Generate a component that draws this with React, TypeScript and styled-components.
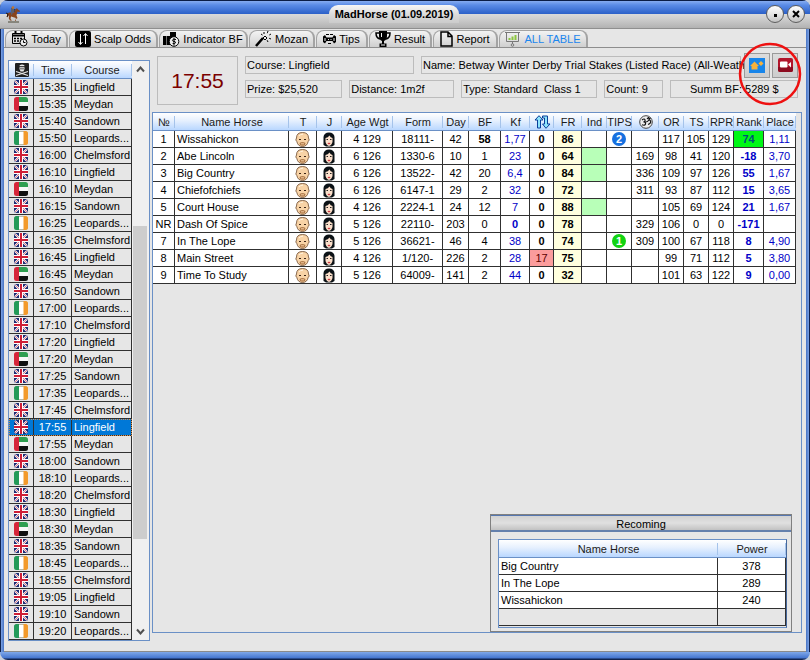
import React, { useState } from "react";
import styled, { createGlobalStyle } from "styled-components";

const line = "#303030";
const edge = "#6a90c6";
const headFill = "linear-gradient(#ffffff, #e6f0fe 45%, #b9d7ff)";

const GlobalStyle = createGlobalStyle`
  * { box-sizing: border-box; }
  body {
    margin: 0;
    background: #c9cfda;
    color: #000;
    font: 11px/16px "Liberation Sans", Arial, sans-serif;
  }
  button { font: inherit; color: inherit; padding: 0; margin: 0; cursor: pointer; }
  svg { display: block; flex: none; }
`;

const Frame = styled.main`
  min-height: 100vh;
  display: flex;
  flex-direction: column;
  padding: 0 4px 8px;
  border-radius: 8px;
  overflow: hidden;
  background: linear-gradient(to bottom, transparent calc(100% - 8px), #7fa8ea calc(100% - 8px), #4475cf calc(100% - 2px), #10234f calc(100% - 1px)),
    linear-gradient(to right, #10234f 1px, #7ca2e4 1px, #4673c4 4px, #4673c4 calc(100% - 4px), #7ca2e4 calc(100% - 1px), #10234f calc(100% - 1px));
`;

const TitleBar = styled.header`
  height: 29px;
  margin: 0 -4px;
  padding: 0 5px;
  display: flex;
  align-items: center;
  border-bottom: 1px solid #8f8f8f;
  background: linear-gradient(#0b1d45 1px, #86acf0 1px, #5b8ce6 5px, #2b60c8 14px, #dadada 14px, #cdcdcd 19px, #b2b2b2 28px);
`;

const TitleSlot = styled.div`
  flex: 1;
  display: flex;
  justify-content: center;
`;

const Title = styled.h1`
  margin: 0;
  padding: 0 6px;
  height: 18px;
  line-height: 18px;
  font-size: 11px;
  border-radius: 9px 9px 0 0;
  background: linear-gradient(#f6f6f6, #dadada 10px, #cbcbcb);
`;

const WindowButtons = styled.div`
  display: flex;
  gap: 3px;
`;

const RoundButton = styled.button`
  width: 18px;
  height: 18px;
  display: grid;
  place-items: center;
  border: 1px solid #5d5d5d;
  border-radius: 50%;
  background: linear-gradient(#ffffff, #e4e4e4 50%, #c2c2c2);
`;

const TabBar = styled.nav`
  height: 19px;
  padding: 1px 1px 0;
  display: flex;
  gap: 1px;
  background: #e6e6e6;
  border-bottom: 1px solid #8e8e8e;
`;

const Tab = styled.button<{ $w: number; $active: boolean }>`
  width: ${(p) => p.$w}px;
  height: 17px;
  display: flex;
  align-items: center;
  justify-content: center;
  gap: 3px;
  white-space: nowrap;
  color: ${(p) => (p.$active ? "#1c86ee" : "#000")};
  border: 2px solid #a3a3a3;
  border-width: 1px 2px 0 1px;
  border-radius: 8px 8px 0 0;
  background: linear-gradient(#f3f3f3, #e2e2e2 50%, #cfcfcf);
`;

const Content = styled.div`
  flex: 1;
  display: flex;
  gap: 2px;
  padding: 0 4px 10px;
  background: #e6e6e6;
  border-bottom: 1px solid #8a8a8a;
`;

const RaceList = styled.section`
  width: 142px;
  flex: none;
  margin-top: 12px;
  display: flex;
  align-items: stretch;
  border: 1px solid ${edge};
`;

const ScrollBar = styled.div`
  width: 17px;
  display: flex;
  flex-direction: column;
  padding: 0 2px 0 1px;
  background: #f0f0f0;
`;

const ScrollButton = styled.button`
  height: 17px;
  display: grid;
  place-items: center;
  border: 0;
  background: transparent;
`;

const ScrollPart = styled.div<{ $grow: number; $thumb?: boolean }>`
  flex: ${(p) => p.$grow} 1 0;
  background: ${(p) => (p.$thumb ? "#cdcdcd" : "transparent")};
`;

const Table = styled.table`
  width: 100%;
  table-layout: fixed;
  border-collapse: separate;
  border-spacing: 0;
`;

const RaceTable = styled(Table)`
  width: 123px;
  align-self: flex-start;
`;

const HeadCell = styled.th`
  height: 18px;
  padding: 1px 0 0;
  line-height: 16px;
  font-weight: normal;
  white-space: nowrap;
  color: #1b1b1b;
  border-bottom: 1px solid ${edge};
  background: linear-gradient(#a5c3ea, #a5c3ea) right 3px / 1px 12px no-repeat, ${headFill};
  & > svg { margin: 0 auto; }
`;

type CellTone = { $align?: string; $bg?: string; $fg?: string; $bold?: boolean };

const Cell = styled.td<CellTone>`
  height: 17px;
  padding: 0 ${(p) => (p.$align === "left" ? "0 0 2px" : "0")};
  text-align: ${(p) => p.$align ?? "center"};
  white-space: nowrap;
  overflow: hidden;
  color: ${(p) => p.$fg ?? "inherit"};
  font-weight: ${(p) => (p.$bold ? "bold" : "normal")};
  background: ${(p) => p.$bg ?? "transparent"};
  border-right: 1px solid ${line};
  border-bottom: 1px solid ${line};
  & > svg { margin: 0 auto; }
`;

const RaceRow = styled.tr<{ $selected: boolean }>`
  cursor: pointer;
  color: ${(p) => (p.$selected ? "#fff" : "#000")};
  background: ${(p) => (p.$selected ? "#0078d7" : "transparent")};
  outline: ${(p) => (p.$selected ? "1px dotted #e0914a" : "none")};
  outline-offset: -1px;
`;

const WhiteRow = styled.tr`
  background: #fff;
`;

const Detail = styled.div`
  flex: 1;
  min-width: 0;
  display: flex;
  flex-direction: column;
  margin-bottom: 8px;
`;

const Info = styled.div`
  height: 64px;
  display: flex;
  gap: 7px;
  padding: 5px 4px 0 5px;
`;

const StartTime = styled.div`
  width: 81px;
  height: 49px;
  flex: none;
  margin-top: 3px;
  display: grid;
  place-items: center;
  font-size: 21px;
  color: #7b0000;
  border: 1px solid #bcbcbc;
`;

const Fields = styled.div`
  flex: 1;
  min-width: 0;
  display: flex;
  flex-direction: column;
  gap: 3px;
`;

const FieldRow = styled.div<{ $h: number }>`
  height: ${(p) => p.$h}px;
  display: flex;
  align-items: center;
  gap: 7px;
`;

const Field = styled.div<{ $w?: number; $center?: boolean }>`
  flex: ${(p) => (p.$w ? `${p.$w} 1 0` : "1")};
  min-width: 0;
  height: 18px;
  padding-left: 1px;
  white-space: pre;
  text-align: ${(p) => (p.$center ? "center" : "left")};
  border: 1px solid #bcbcbc;
`;

const CourseField = styled(Field)`
  flex: none;
  width: 169px;
`;

const Actions = styled.div`
  position: relative;
  display: flex;
  gap: 2px;
  margin-left: -4px;
`;

const ActionButton = styled.button`
  width: 26px;
  height: 25px;
  display: grid;
  place-items: center;
  border: 1px solid #9a9a9a;
  background: linear-gradient(#dcdcdc, #cdcdcd);
`;

const Marker = styled.svg`
  position: absolute;
  left: -6px;
  top: -11px;
  pointer-events: none;
`;

const Board = styled.section`
  flex: 1;
  display: flex;
  flex-direction: column;
  justify-content: space-between;
  border: 1px solid ${edge};
`;

const HorseArea = styled.div`
  padding-right: 5px;
`;

const Badge = styled.span<{ $color: string }>`
  display: block;
  width: 14px;
  height: 14px;
  margin: 0 auto;
  line-height: 14px;
  font-size: 11px;
  font-weight: bold;
  color: #fff;
  border-radius: 50%;
  background: ${(p) => p.$color};
`;

const Recoming = styled.section`
  width: 302px;
  align-self: flex-end;
  margin-right: 9px;
  border: 1px solid #808080;
`;

const RecomingTitle = styled.h2`
  margin: 0;
  height: 17px;
  line-height: 16px;
  font-size: 11px;
  font-weight: normal;
  text-align: center;
  border-top: 1px solid #5577b0;
  border-bottom: 2px solid #6480ac;
  background: linear-gradient(#d2d2d2, #e0e0e0 50%, #c2c2c2);
`;

const RecomingBody = styled.div`
  margin: 7px 4px 3px 7px;
  padding-bottom: 1px;
  border: 1px solid ${edge};
  border-right-color: #46689c;
`;

/* ---------- icons ---------- */

const HorseIcon = () => (
  <svg width="17" height="17" viewBox="0 0 17 17">
    <path d="M3 16h11" stroke="#4a4936" />
    <path d="M2 8l2-1.500h5l2-3.500 1-1 .5 1 2.500 2-.5 1-2-.5-1 4 1 2.500-2 1.500.5 1.500H10l.5-2 .5-1L6 10.500 5.500 13 7 14.500H5L3.800 12.500 4 9.500 2 11.500Z" fill="#87441d" />
    <path d="M1 7l2 1-1 3M10 3l-1 3" stroke="#2b1a10" fill="none" />
    <path d="M6 2l2-1 1 3 1.500 1L8 6l-1 3-1-.5Z" fill="#5c5f6b" />
    <circle cx="8" cy="1.500" r="1.300" fill="#c4762e" />
  </svg>
);

const CalendarIcon = () => (
  <svg width="17" height="16" viewBox="0 0 17 16" fill="none" stroke="#000">
    <path d="M9 12.500H1.500v-10h12V8" />
    <path d="M1 4.500h13M4.500 0v3M10.500 0v3" strokeWidth="2" />
    <path d="M3 7.500h2M6 7.500h2M9 7.500h2M3 10h2M6 10h2" strokeWidth="1.500" />
    <circle cx="12.500" cy="11.500" r="3.500" fill="#eee" />
    <path d="M12.500 9.500v2h2" />
  </svg>
);

const OddsIcon = () => (
  <svg width="16" height="16" viewBox="0 0 16 16">
    <rect width="16" height="16" rx="2" fill="#000" />
    <path d="M5.500 3v10M3.500 11l2 2.500 2-2.500M10.500 13V3M8.500 5l2-2.500 2 2.500" stroke="#fff" fill="none" />
  </svg>
);

const MoneyIcon = () => (
  <svg width="17" height="16" viewBox="0 0 17 16">
    <path d="M0 5h3v9H0ZM3.500 5H7V1h6v5H9v8H3.500Z" fill="#000" />
    <circle cx="11" cy="10.500" r="4.800" fill="#eee" stroke="#000" />
    <path d="M13 8.500q-3.500-1-3.500.7t2.500 1.300q1.500 1.500-.5 2t-2-.5M11 7v7.500" stroke="#000" fill="none" />
  </svg>
);

const WandIcon = () => (
  <svg width="17" height="16" viewBox="0 0 17 16" fill="none" stroke="#000">
    <path d="M1 15l7-8" strokeWidth="2.500" />
    <path d="M8 7l2-2 2 2-2 2Z" fill="#eee" />
    <path d="M9 1v2M13 0l-1 3M16 3l-2.500 1.500M16 8l-2.500-1M13 11l-1-2M6 3l1.500 1" strokeDasharray="2 1" />
  </svg>
);

const TipsIcon = () => (
  <svg width="13" height="12" viewBox="0 0 13 12">
    <path d="M0 3.500L2 2l1.500 2.500h6L11 2l2 1.500V9l-2 1.500L9.500 8h-6L2 10.500 0 9Z" fill="#000" />
    <path d="M3 1.500h3M7 1.500h3M5 10.500h3" stroke="#000" />
    <path d="M2 5v3M11 5v3M5 6.500h1M7.500 6.500h1" stroke="#eee" />
  </svg>
);

const CupIcon = () => (
  <svg width="16" height="16" viewBox="0 0 16 16">
    <path d="M4 0h8v5q0 4-3 5v2.500h2.500V16h-7v-3.500H7V10Q4 9 4 5Z" fill="#000" />
    <path d="M4 2H1q0 5 4 6M12 2h3q0 5-4 6" fill="none" stroke="#000" strokeWidth="1.500" />
    <path d="M6.500 2v4M6 14h4" stroke="#eee" />
  </svg>
);

const PageIcon = () => (
  <svg width="13" height="16" viewBox="0 0 13 16" fill="none" stroke="#000" strokeWidth="1.500">
    <path d="M1 1h7l4 4v10H1ZM8 1v4.500h4" />
  </svg>
);

const BoardIcon = () => (
  <svg width="16" height="16" viewBox="0 0 16 16" fill="none">
    <path d="M0 1.500h15M1.500 2v8.500h12V2M7.500 11v2" stroke="#787878" />
    <circle cx="7.500" cy="14" r="1.300" stroke="#787878" />
    <path d="M4.500 9V7M7.500 9V5.500M10.500 9V4" stroke="#8cc63f" strokeWidth="2" />
  </svg>
);

const SkullIcon = () => (
  <svg width="14" height="14" viewBox="0 0 14 14">
    <rect width="14" height="14" rx="1" fill="#202020" />
    <path d="M1 8.500l12 4M13 8.500l-12 4" stroke="#e8e8e8" strokeWidth="1.300" />
    <path d="M4.500 2.500q2.500-2 5 0v3.500L8.500 8.500h-3L4.500 6Z" fill="#e8e8e8" />
    <path d="M4 3.700h6" stroke="#202020" />
    <path d="M6 5v1.500M8 5v1.500" stroke="#202020" />
  </svg>
);

const FlagUK = () => (
  <svg width="14" height="14" viewBox="0 0 14 14" aria-label="UK">
    <rect width="14" height="14" rx="2.500" fill="#1d2a72" />
    <path d="M1 1l12 12M13 1L1 13" stroke="#fff" strokeWidth="2" />
    <path d="M1 1l12 12M13 1L1 13" stroke="#d34252" strokeWidth=".7" />
    <path d="M7 0v14M0 7h14" stroke="#fff" strokeWidth="4" />
    <path d="M7 0v14M0 7h14" stroke="#cf1e36" strokeWidth="2" />
  </svg>
);

const FlagUAE = () => (
  <svg width="14" height="14" viewBox="0 0 14 14" aria-label="UAE">
    <rect width="14" height="14" rx="2.500" fill="#f7f7f7" />
    <path d="M4 0h7.500Q14 0 14 2.500V5H4Z" fill="#2f9e50" />
    <path d="M4 9h10v2.500Q14 14 11.500 14H4Z" fill="#101010" />
    <path d="M5 0H2.500Q0 0 0 2.500v9Q0 14 2.500 14H5Z" fill="#d5263a" />
  </svg>
);

const FlagIreland = () => (
  <svg width="14" height="14" viewBox="0 0 14 14" aria-label="Ireland">
    <rect x=".5" y=".5" width="13" height="13" rx="2" fill="#fff" stroke="#b9b9a9" />
    <path d="M5 0H2.500Q0 0 0 2.500v9Q0 14 2.500 14H5Z" fill="#239a58" />
    <path d="M9.500 0h2Q14 0 14 2.500v9Q14 14 11.500 14h-2Z" fill="#f39a2b" />
  </svg>
);

const flags = { uk: FlagUK, ae: FlagUAE, ie: FlagIreland };

const TrainerIcon = () => (
  <svg width="15" height="15" viewBox="0 0 15 15">
    <path d="M1.500 6Q1.500.5 7.500.5T13.500 6l.7 2-1 1.500Q12 14.500 7.500 14.500T1.800 9.500L.8 8Z" fill="#f8d3a6" stroke="#6b482c" strokeWidth=".8" />
    <path d="M4.500 11q3-2 6 0l-.5 2q-2.500 1.500-5 0Z" fill="#b07c4c" />
    <path d="M6 11.800h3" stroke="#f3c9a0" />
    <path d="M4 7.500h2M9 7.500h2" stroke="#3a2416" />
    <path d="M4 4q1.500-2 4-1.800" stroke="#fff3e0" fill="none" />
  </svg>
);

const JockeyIcon = () => (
  <svg width="14" height="15" viewBox="0 0 14 15">
    <path d="M1.500 13V5Q2 .5 7 .5T12.500 5v8L10 14.500H4Z" fill="#0c1216" />
    <path d="M3.500 6Q6 5.500 7.500 3.500 8.500 5.500 10.500 6v4Q9.500 13.500 7 14 4.500 13.500 3.500 10Z" fill="#fbe0cb" />
    <path d="M4.500 7.500h1.500M8 7.500h1.500" stroke="#222" />
    <path d="M5.800 11.500h2.400" stroke="#d13d45" strokeWidth="1.300" />
  </svg>
);

const SwapIcon = () => (
  <svg width="17" height="14" viewBox="0 0 17 14" fill="#8fe4fb" stroke="#0a3f9a">
    <path d="M5 .7L9 5H6.500v8h-3V5H1Z" />
    <path d="M12 13.300L8.500 9h2V3H8.500V1h5v8H16Z" />
  </svg>
);

const OmIcon = () => (
  <svg width="14" height="14" viewBox="0 0 14 14" fill="none" stroke="#151515">
    <circle cx="7" cy="7" r="6.300" fill="#eee" stroke="#444" />
    <path d="M3 5q2.500-2 3 0T4.500 6.800Q7 7 6.500 9T3 9.800M6.500 7q2 0 3-1.500t2 .5T9 9.500M8 3q1.500 1.500 3.500 0M9.500 2v1" strokeWidth="1.200" />
  </svg>
);

const ThumbIcon = () => (
  <svg width="16" height="15" viewBox="0 0 16 15">
    <rect width="16" height="15" fill="#1785ea" />
    <path d="M1 8l4.500-4.500L10 8H8.500v3.500h-6V8Z" fill="#f6b23c" />
    <path d="M12 3l2.500 2.500L12 8 9.500 5.500Z" fill="#f6b23c" />
  </svg>
);

const VideoIcon = () => (
  <svg width="15" height="14" viewBox="0 0 15 14">
    <rect width="15" height="14" rx="2" fill="#b1152b" />
    <path d="M0 9h15v3q0 2-2 2H2q-2 0-2-2Z" fill="#8d0b1f" />
    <rect x="2" y="3.500" width="7.500" height="6" rx="1" fill="#fff" />
    <path d="M10 6.500L13 4v5.500Z" fill="#fff" />
  </svg>
);

const Chevron = ({ up }: { up?: boolean }) => (
  <svg width="9" height="7" viewBox="0 0 9 7" fill="none" stroke="#505050" strokeWidth="2">
    <path d={up ? "M1 5.500l3.500-4 3.500 4" : "M1 1.500l3.500 4 3.500-4"} />
  </svg>
);

/* ---------- data ---------- */

const tabs = [
  { label: "Today", w: 63, Icon: CalendarIcon },
  { label: "Scalp Odds", w: 89, Icon: OddsIcon },
  { label: "Indicator BF", w: 89, Icon: MoneyIcon },
  { label: "Mozan", w: 66, Icon: WandIcon },
  { label: "Tips", w: 52, Icon: TipsIcon },
  { label: "Result", w: 63, Icon: CupIcon },
  { label: "Report", w: 65, Icon: PageIcon },
  { label: "ALL TABLE", w: 89, Icon: BoardIcon },
];

const venues = {
  L: { name: "Lingfield", flag: "uk" },
  M: { name: "Meydan", flag: "ae" },
  S: { name: "Sandown", flag: "uk" },
  P: { name: "Leopards...", flag: "ie" },
  C: { name: "Chelmsford", flag: "uk" },
} as const;

const races = (
  "15:35L 15:35M 15:40S 15:50P 16:00C 16:10L 16:10M 16:15S 16:25P 16:35C 16:45L 16:45M 16:50S 17:00P 17:10C 17:20L 17:20M " +
  "17:25S 17:35P 17:45C 17:55L 17:55M 18:00S 18:10P 18:20C 18:30L 18:30M 18:35S 18:45P 18:55C 19:05L 19:10S 19:20P"
)
  .split(" ")
  .map((r) => ({ time: r.slice(0, 5), ...venues[r.slice(5) as keyof typeof venues] }));

type Horse = {
  no: string; name: string; age: string; form: string; day: number; bf: number; kf: string; move: number;
  fr: number; ind?: boolean; tip?: number; om?: number; or: number; ts: number; rpr: number; rank: number; place: string;
};

const horses: Horse[] = [
  { no: "1", name: "Wissahickon", age: "4 129", form: "18111-", day: 42, bf: 58, kf: "1,77", move: 0, fr: 86, tip: 2, or: 117, ts: 105, rpr: 129, rank: 74, place: "1,11" },
  { no: "2", name: "Abe Lincoln", age: "6 126", form: "1330-6", day: 10, bf: 1, kf: "23", move: 0, fr: 64, ind: true, om: 169, or: 98, ts: 41, rpr: 120, rank: -18, place: "3,70" },
  { no: "3", name: "Big Country", age: "6 126", form: "13522-", day: 42, bf: 20, kf: "6,4", move: 0, fr: 84, ind: true, om: 336, or: 109, ts: 97, rpr: 126, rank: 55, place: "1,67" },
  { no: "4", name: "Chiefofchiefs", age: "6 126", form: "6147-1", day: 29, bf: 2, kf: "32", move: 0, fr: 72, om: 311, or: 93, ts: 87, rpr: 112, rank: 15, place: "3,65" },
  { no: "5", name: "Court House", age: "4 126", form: "2224-1", day: 24, bf: 12, kf: "7", move: 0, fr: 88, ind: true, or: 105, ts: 69, rpr: 124, rank: 21, place: "1,67" },
  { no: "NR", name: "Dash Of Spice", age: "5 126", form: "22110-", day: 203, bf: 0, kf: "0", move: 0, fr: 78, om: 329, or: 106, ts: 0, rpr: 0, rank: -171, place: "" },
  { no: "7", name: "In The Lope", age: "5 126", form: "36621-", day: 46, bf: 4, kf: "38", move: 0, fr: 74, tip: 1, om: 309, or: 100, ts: 67, rpr: 118, rank: 8, place: "4,90" },
  { no: "8", name: "Main Street", age: "4 126", form: "1/120-", day: 226, bf: 2, kf: "28", move: 17, fr: 75, or: 99, ts: 71, rpr: 112, rank: 5, place: "3,80" },
  { no: "9", name: "Time To Study", age: "5 126", form: "64009-", day: 141, bf: 2, kf: "44", move: 0, fr: 32, or: 101, ts: 63, rpr: 122, rank: 9, place: "0,00" },
];

const columns: { head: React.ReactNode; w?: number }[] = [
  { head: "№", w: 22 }, { head: "Name Horse" }, { head: "T", w: 28 }, { head: "J", w: 25 },
  { head: "Age Wgt", w: 51 }, { head: "Form", w: 50 }, { head: "Day", w: 26 }, { head: "BF", w: 32 },
  { head: "Kf", w: 29 }, { head: <SwapIcon />, w: 24 }, { head: "FR", w: 28 }, { head: "Ind", w: 25 },
  { head: "TIPS", w: 25 }, { head: <OmIcon />, w: 27 }, { head: "OR", w: 25 }, { head: "TS", w: 25 },
  { head: "RPR", w: 25 }, { head: "Rank", w: 30 }, { head: "Place", w: 32 },
];

const powers: [string, string][] = [["Big Country", "378"], ["In The Lope", "289"], ["Wissahickon", "240"]];

const blue = "#0000c8";

const HorseRow = ({ h }: { h: Horse }) => (
  <WhiteRow>
    <Cell>{h.no}</Cell>
    <Cell $align="left">{h.name}</Cell>
    <Cell><TrainerIcon /></Cell>
    <Cell><JockeyIcon /></Cell>
    <Cell>{h.age}</Cell>
    <Cell>{h.form}</Cell>
    <Cell>{h.day}</Cell>
    <Cell $bold={h.bf > 50}>{h.bf}</Cell>
    <Cell $fg={blue} $bold={h.kf === "0"}>{h.kf}</Cell>
    <Cell $bold={h.move === 0} $bg={h.move ? "#fb9c9c" : undefined} $fg={h.move ? "#5c0000" : undefined}>{h.move}</Cell>
    <Cell $bold $bg="#ffffde">{h.fr}</Cell>
    <Cell $bg={h.ind ? "#b8ffb8" : undefined} />
    <Cell>{h.tip && <Badge $color={h.tip === 1 ? "#12d312" : "#1670e0"}>{h.tip}</Badge>}</Cell>
    <Cell>{h.om}</Cell>
    <Cell>{h.or}</Cell>
    <Cell>{h.ts}</Cell>
    <Cell>{h.rpr}</Cell>
    <Cell $bold $fg={h.rank > 70 ? "#00507a" : blue} $bg={h.rank > 70 ? "#00f815" : undefined}>{h.rank}</Cell>
    <Cell $fg={blue}>{h.place}</Cell>
  </WhiteRow>
);

export default function App() {
  const [tab, setTab] = useState("ALL TABLE");
  const [selected, setSelected] = useState(20);

  return (
    <>
      <GlobalStyle />
      <Frame>
        <TitleBar>
          <HorseIcon />
          <TitleSlot><Title>MadHorse (01.09.2019)</Title></TitleSlot>
          <WindowButtons>
            <RoundButton aria-label="Minimize">
              <svg width="8" height="8"><path d="M3 4h3v3H3Z" /></svg>
            </RoundButton>
            <RoundButton aria-label="Close">
              <svg width="8" height="8"><path d="M1 1l6 6M7 1L1 7" stroke="#000" strokeWidth="2" /></svg>
            </RoundButton>
          </WindowButtons>
        </TitleBar>

        <TabBar>
          {tabs.map(({ label, w, Icon }) => (
            <Tab key={label} $w={w} $active={label === tab} onClick={() => setTab(label)}>
              <Icon />
              {label}
            </Tab>
          ))}
        </TabBar>

        <Content>
          <RaceList>
            <RaceTable>
              <colgroup><col width="25" /><col width="38" /><col width="60" /></colgroup>
              <thead>
                <tr>
                  <HeadCell aria-label="Country"><SkullIcon /></HeadCell>
                  <HeadCell>Time</HeadCell>
                  <HeadCell>Course</HeadCell>
                </tr>
              </thead>
              <tbody>
                {races.map((r, i) => {
                  const Flag = flags[r.flag];
                  return (
                    <RaceRow key={i} $selected={i === selected} onClick={() => setSelected(i)}>
                      <Cell><Flag /></Cell>
                      <Cell>{r.time}</Cell>
                      <Cell $align="left">{r.name}</Cell>
                    </RaceRow>
                  );
                })}
              </tbody>
            </RaceTable>
            <ScrollBar>
              <ScrollButton aria-label="Scroll up"><Chevron up /></ScrollButton>
              <ScrollPart $grow={148} />
              <ScrollPart $grow={314} $thumb />
              <ScrollPart $grow={84} />
              <ScrollButton aria-label="Scroll down"><Chevron /></ScrollButton>
            </ScrollBar>
          </RaceList>

          <Detail>
            <Info>
              <StartTime>17:55</StartTime>
              <Fields>
                <FieldRow $h={24}>
                  <CourseField>Course: Lingfield</CourseField>
                  <Field>Name: Betway Winter Derby Trial Stakes (Listed Race) (All-Weath</Field>
                  <Actions>
                    <ActionButton aria-label="Favourites"><ThumbIcon /></ActionButton>
                    <ActionButton aria-label="Video"><VideoIcon /></ActionButton>
                    <Marker width="65" height="64" viewBox="0 0 65 64">
                      <ellipse cx="32" cy="32" rx="30" ry="30" fill="none" stroke="#ee1111" strokeWidth="2.500" />
                    </Marker>
                  </Actions>
                </FieldRow>
                <FieldRow $h={18}>
                  <Field $w={97}>Prize: $25,520</Field>
                  <Field $w={105}>Distance: 1m2f</Field>
                  <Field $w={137}>{"Type: Standard  Class 1"}</Field>
                  <Field $w={57}>Count: 9</Field>
                  <Field $w={129} $center>Summ BF: 5289 $</Field>
                </FieldRow>
              </Fields>
            </Info>

            <Board>
              <HorseArea>
                <Table>
                  <colgroup>{columns.map((c, i) => <col key={i} width={c.w} />)}</colgroup>
                  <thead><tr>{columns.map((c, i) => <HeadCell key={i}>{c.head}</HeadCell>)}</tr></thead>
                  <tbody>{horses.map((h) => <HorseRow key={h.no} h={h} />)}</tbody>
                </Table>
              </HorseArea>

              <Recoming>
                <RecomingTitle>Recoming</RecomingTitle>
                <RecomingBody>
                  <Table>
                    <colgroup><col /><col width="68" /></colgroup>
                    <thead><tr><HeadCell>Name Horse</HeadCell><HeadCell>Power</HeadCell></tr></thead>
                    <tbody>
                      {powers.map(([name, power]) => (
                        <WhiteRow key={name}><Cell $align="left">{name}</Cell><Cell>{power}</Cell></WhiteRow>
                      ))}
                      <tr><Cell /><Cell /></tr>
                    </tbody>
                  </Table>
                </RecomingBody>
              </Recoming>
            </Board>
          </Detail>
        </Content>
      </Frame>
    </>
  );
}
